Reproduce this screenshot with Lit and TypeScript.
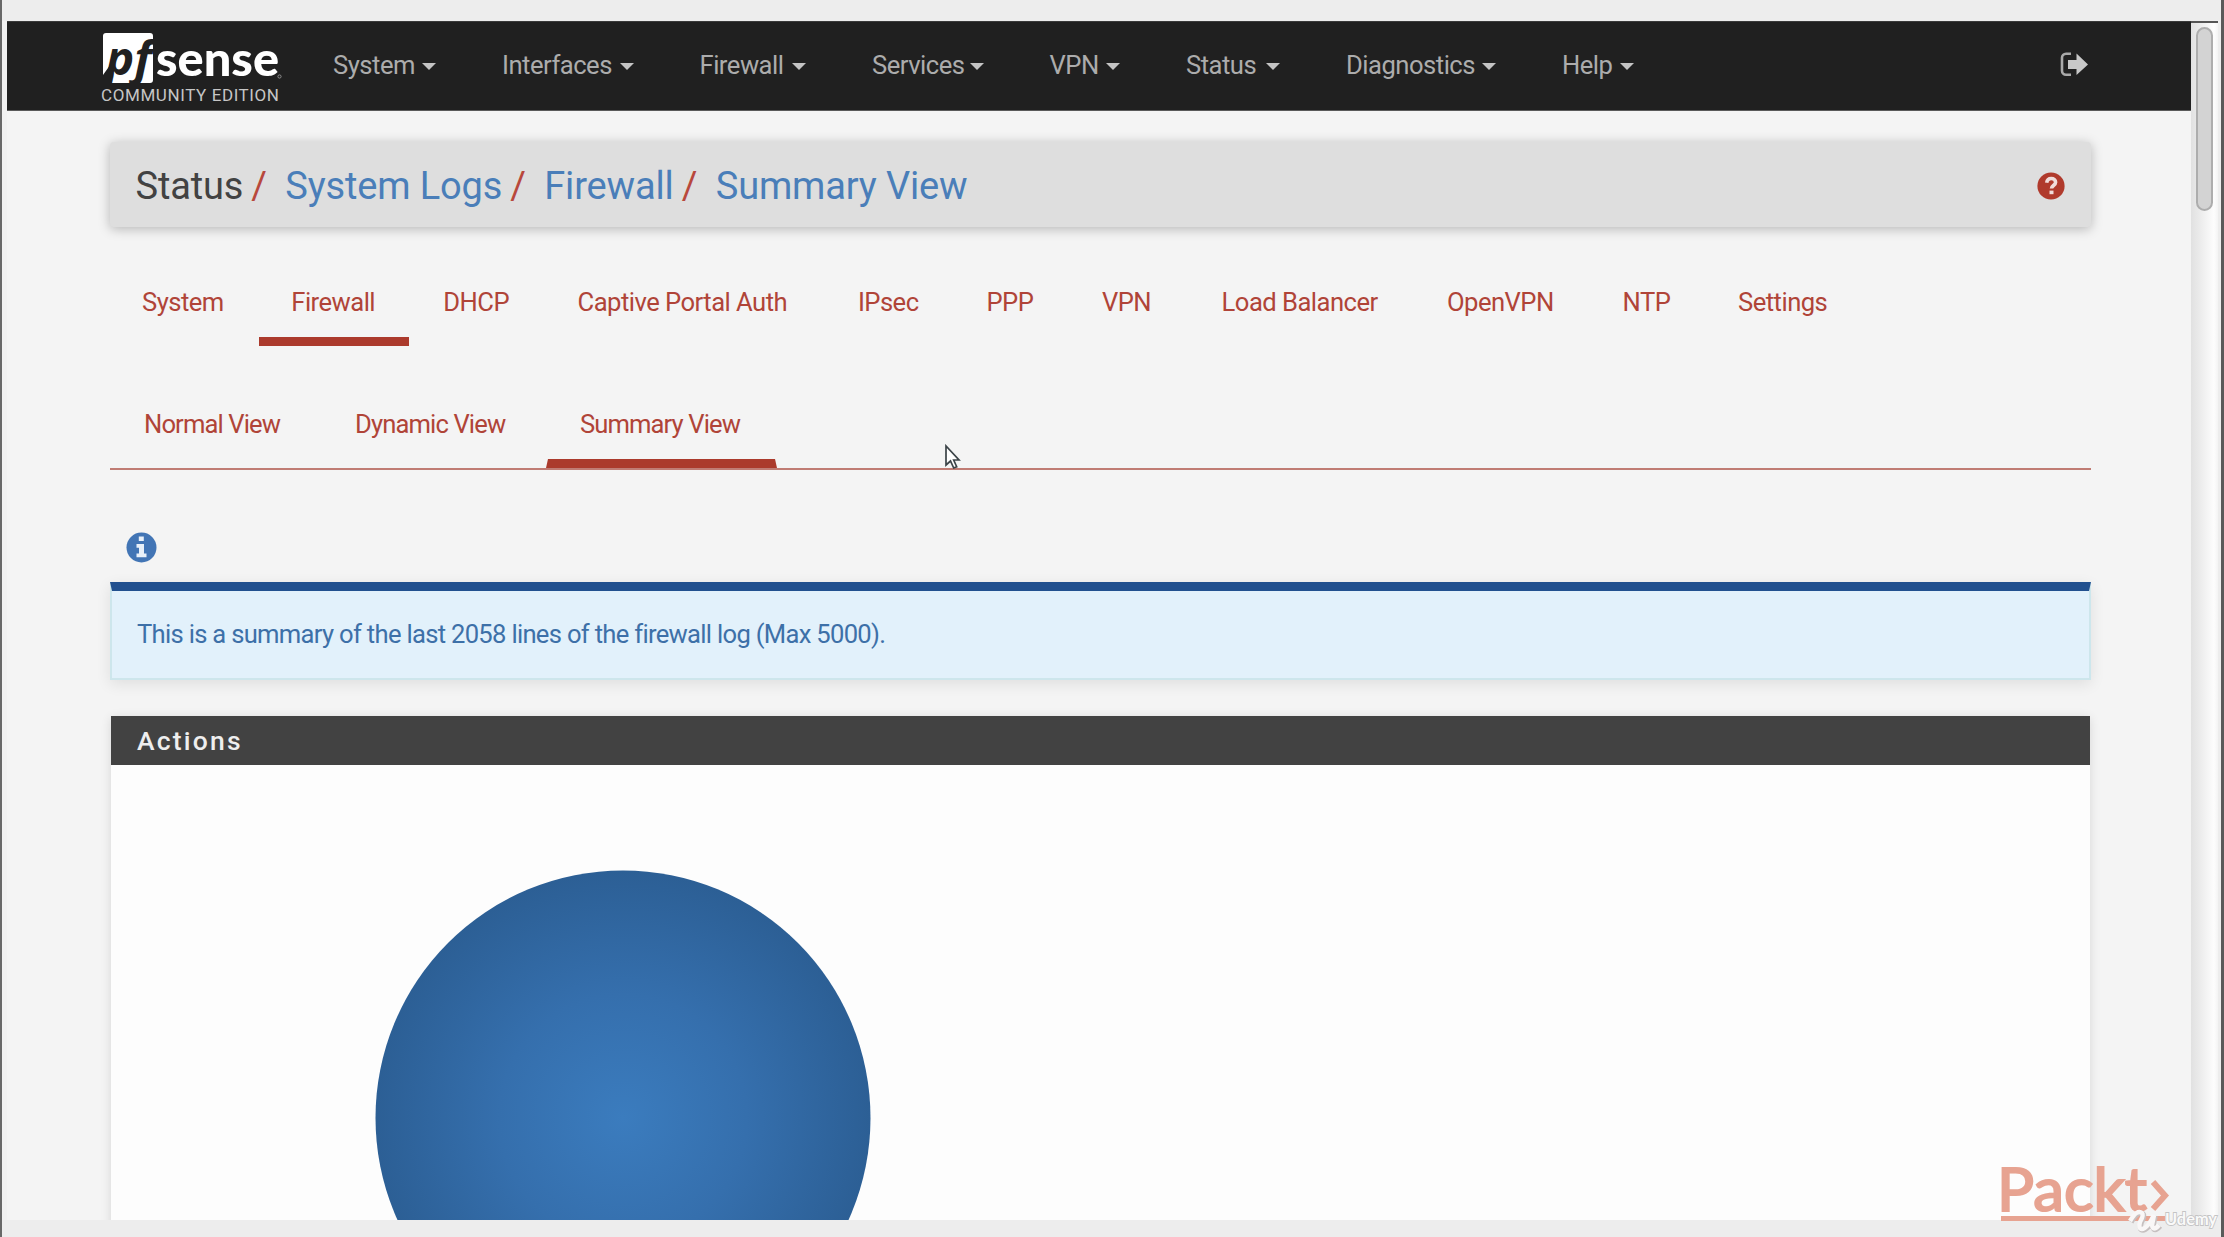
import { LitElement, html, css } from "lit";
import { customElement, property } from "lit/decorators.js";
import { classMap } from "lit/directives/class-map.js";
import { styleMap } from "lit/directives/style-map.js";

// A label and the width of the slot it sits in.
type Slot = [label: string, width: number];

const MENUS: Slot[] = [
  ["System", 79], ["Interfaces", 107.5], ["Firewall", 82.5], ["Services", 87.5],
  ["VPN", 46.5], ["Status", 70], ["Diagnostics", 126], ["Help", 48],
];
const LOG_TABS: Slot[] = [
  ["System", 83.3], ["Firewall", 86], ["DHCP", 68.3], ["Captive Portal Auth", 214.3], ["IPsec", 62.6], ["PPP", 49.5],
  ["VPN", 53.6], ["Load Balancer", 159.4], ["OpenVPN", 109.6], ["NTP", 49.5], ["Settings", 90],
];
const VIEW_TABS: Slot[] = [["Normal View", 141.1], ["Dynamic View", 154.8], ["Summary View", 162.8]];
const CRUMBS = ["System Logs", "Firewall", "Summary View"];

@customElement("pf-logo")
class PfLogo extends LitElement {
  static styles = css`
    :host { display: block; width: 182px; height: 90px; }
    svg { display: block; }
    .pf { font: italic 700 46px "Open Sans", sans-serif; fill: #202020; }
    .sense { font: 900 48px Lato, sans-serif; fill: #fff; }
    .edition { font: 400 17px Roboto, sans-serif; fill: #c6c6c6; }
    .mark { fill: #fff; }
    .reg { fill: none; stroke: #8c8c8c; }
  `;
  render() {
    return html`<svg width="182" height="90" viewBox="0 0 182 90">
      <path class="mark" d="M6 12h44q3 0 3 3v44q0 3-3 3H8l5-22L3 54V15q0-3 3-3z" />
      <text class="pf" x="6" y="53.500" textLength="46" lengthAdjust="spacingAndGlyphs">pf</text>
      <text class="sense" x="56" y="54.500" textLength="123" lengthAdjust="spacingAndGlyphs">sense</text>
      <circle class="reg" cx="179.500" cy="55.500" r="1.600" />
      <text class="edition" x="1" y="80" textLength="178" lengthAdjust="spacing">COMMUNITY EDITION</text>
    </svg>`;
  }
}

@customElement("pf-navbar")
class PfNavbar extends LitElement {
  static styles = css`
    :host {
      display: flex; align-items: stretch; box-sizing: border-box; height: 90px;
      background: #202020; border-top: 1px solid #3a3a3a; border-bottom: 1px solid #5a5a5a;
      padding: 0 102px 0 93px;
    }
    pf-logo { margin-top: -1px; }
    .menu { display: flex; align-items: center; gap: 66px; margin-left: 51px; padding-bottom: 3px; flex: 1; }
    .item { display: flex; align-items: center; gap: 10px; color: #acacac; font-size: 25.6px; letter-spacing: -0.5px; line-height: 34px; white-space: nowrap; }
    .caret { border: 7px solid transparent; border-top-color: #c4c4c4; border-bottom: 0; margin-top: 3px; }
    .exit { align-self: center; margin-bottom: 4px; }
  `;
  render() {
    return html`
      <pf-logo></pf-logo>
      <div class="menu">${MENUS.map(([label, w]) => html`
        <div class="item"><span style=${styleMap({ width: `${w}px` })}>${label}</span><i class="caret"></i></div>`)}
      </div>
      <svg class="exit" width="29" height="25" viewBox="0 0 29 25">
        <path d="M11 1.700H6A4 4 0 0 0 2 5.700v13a4 4 0 0 0 4 4h5" fill="none" stroke="#a9a9a9" stroke-width="2.600" />
        <path d="M8 8h8.500V1.500L28 12.500 16.500 23V17H8z" fill="#c8c8c8" />
      </svg>`;
  }
}

@customElement("pf-tabs")
class PfTabs extends LitElement {
  @property({ attribute: false }) tabs: Slot[] = [];
  @property() active = "";
  static styles = css`
    :host { display: flex; }
    .tab {
      color: #b04438; font-size: 25.6px; letter-spacing: var(--tab-spacing, -0.53px); line-height: 34px; white-space: nowrap;
      height: 52px; padding: 0 var(--tab-pad, 32px); margin-right: 2px;
      border: solid transparent; border-width: 0 var(--tab-side, 0) 9px;
    }
    .active { border-bottom-color: #ab3a2c; }
  `;
  render() {
    return this.tabs.map(([label, w]) => html`
      <div class=${classMap({ tab: true, active: label === this.active })} style=${styleMap({ width: `${w}px` })}>${label}</div>`);
  }
}

@customElement("app-root")
class AppRoot extends LitElement {
  static styles = css`
    :host {
      display: block; position: relative; box-sizing: border-box; width: 2224px; height: 1237px; overflow: hidden;
      background: #ededed; border-left: 2px solid #686868; border-right: 3px solid #5a5a5a;
      padding: 21px 3px 0 5px; font-family: Roboto, sans-serif;
    }
    .window { display: flex; height: 1198.5px; overflow: hidden; box-shadow: -5px 0 #f1f1f1; }
    .page { width: 2184px; background: #f4f4f4; overflow: hidden; }
    .scroll { flex: 1; border-top: 2px solid #555; background: linear-gradient(90deg, #e1e1e1, #ececec 35%, #fdfdfd 85%, #f4f4f4); padding: 4px 4px 0 5px; }
    .thumb { width: 17px; height: 184px; box-sizing: border-box; border: 2px solid #adadad; border-radius: 9px; background: #d3d3d3; }
    .content { padding: 31px 100px 0 103px; }
    .crumbs {
      display: flex; align-items: center; box-sizing: border-box; height: 85px; padding: 2px 26px 0 25.5px;
      background: #dedede; border-radius: 4px; box-shadow: 0 2px 12px rgba(0,0,0,.26);
      font-size: 38px; letter-spacing: -0.15px; line-height: 50px; white-space: nowrap; color: #424242;
    }
    .slash { color: #b8483c; margin: 0 18.5px 0 8px; }
    .link { color: #4a7eb9; }
    .help { margin-left: auto; }
    .main-tabs { margin-top: 58px; }
    .view-tabs { --tab-side: 2px; --tab-pad: 32px; --tab-spacing: -0.88px; margin-top: 61px; border-bottom: 2px solid #c07c74; }
    .info { display: block; margin: 62px 0 0 16px; }
    .alert {
      box-sizing: border-box; height: 98px; margin-top: 19px; padding: 26px 25px 0; border: 2px solid #cde6ec;
      border-top: 9px solid #21508f; background: #e2f1fb; color: #3d70a8;
      font-size: 25.6px; letter-spacing: -0.7px; line-height: 34px; box-shadow: 0 4px 14px rgba(0,0,0,.09);
    }
    .panel { margin: 36px 1px 0; height: 600px; background: #fdfdfd; box-shadow: 0 2px 10px rgba(0,0,0,.12); }
    .panel-head {
      box-sizing: border-box; height: 49px; padding: 8px 26px 0; background: #424242; color: #eee;
      font-size: 26.5px; font-weight: 500; letter-spacing: 2.2px; line-height: 34px;
    }
    .pie { display: block; margin: 105px 0 0 264px; }
    .cursor { position: absolute; left: 942px; top: 444px; }
    .packt { position: absolute; left: 1996px; top: 1135px; }
    .packt-name { font: 400 60px Lato, sans-serif; fill: #e7a391; stroke: #e7a391; stroke-width: 2px; }
    .udemy-name { font: 700 17px Lato, sans-serif; fill: #fafafa; stroke: #c4c4c4; stroke-width: 1.8px; paint-order: stroke; }
  `;
  render() {
    return html`
      <div class="window">
        <div class="page">
          <pf-navbar></pf-navbar>
          <div class="content">
            <div class="crumbs">
              <span>Status</span>
              ${CRUMBS.map((c) => html`<span class="slash">/</span><span class="link">${c}</span>`)}
              <svg class="help" width="28" height="28" viewBox="0 0 28 28">
                <circle cx="14" cy="14" r="13.600" fill="#b03a2c" />
                <path d="M9.700 10.800c.4-3 2.200-4.300 4.600-4.300 2.500 0 4.300 1.500 4.300 3.700 0 3.300-4.100 3.300-4.100 6.300" fill="none" stroke="#f0dcda" stroke-width="3.600" />
                <rect x="12.500" y="18.600" width="4" height="3.600" fill="#f0dcda" />
              </svg>
            </div>
            <pf-tabs class="main-tabs" .tabs=${LOG_TABS} active="Firewall"></pf-tabs>
            <pf-tabs class="view-tabs" .tabs=${VIEW_TABS} active="Summary View"></pf-tabs>
            <svg class="info" width="31" height="31" viewBox="0 0 31 31">
              <circle cx="15.500" cy="15.500" r="15" fill="#4275b5" />
              <path d="M12.800 4.500h5v4.500h-5zM10.500 12h7.500v9.500h2.500v3.800h-10v-3.800H13v-5.700h-2.500z" fill="#e8f0f9" />
            </svg>
            <div class="alert">This is a summary of the last 2058 lines of the firewall log (Max 5000).</div>
            <div class="panel">
              <div class="panel-head">Actions</div>
              <svg class="pie" width="496" height="496" viewBox="0 0 496 496">
                <defs>
                  <radialGradient id="blue">
                    <stop offset="0" stop-color="#3b7cbe" />
                    <stop offset=".5" stop-color="#356fad" />
                    <stop offset="1" stop-color="#2c5f95" />
                  </radialGradient>
                </defs>
                <circle cx="248" cy="248" r="247.500" fill="url(#blue)" />
              </svg>
            </div>
          </div>
        </div>
        <div class="scroll"><div class="thumb"></div></div>
      </div>
      <svg class="cursor" width="18" height="26" viewBox="0 0 18 26">
        <path d="M2 2v19l4.500-4 3.200 7 3-1.300-3-6.700H15z" fill="#fff" stroke="#3c4448" stroke-width="1.700" />
      </svg>
      <svg class="packt" width="223" height="102" viewBox="-2 -20 223 102">
        <text class="packt-name" x="-3" y="56" textLength="150" lengthAdjust="spacingAndGlyphs">Packt</text>
        <path d="M153 27l12 13.500-12 13.500" fill="none" stroke="#e7a391" stroke-width="6" />
        <path d="M1 63.500h164" stroke="#e7a391" stroke-width="5" />
        <path d="M130 66q7-12 12-8 2 2-2 9-2 7 2 7 5 0 12-14l-2 10q1 7 7 0" transform="translate(1 1)" fill="none" stroke="#c6c0c0" stroke-width="5.500" />
        <path d="M130 66q7-12 12-8 2 2-2 9-2 7 2 7 5 0 12-14l-2 10q1 7 7 0" fill="none" stroke="#f9f7f7" stroke-width="4.500" />
        <text class="udemy-name" x="165" y="70" textLength="52" lengthAdjust="spacingAndGlyphs">Udemy</text>
      </svg>`;
  }
}
